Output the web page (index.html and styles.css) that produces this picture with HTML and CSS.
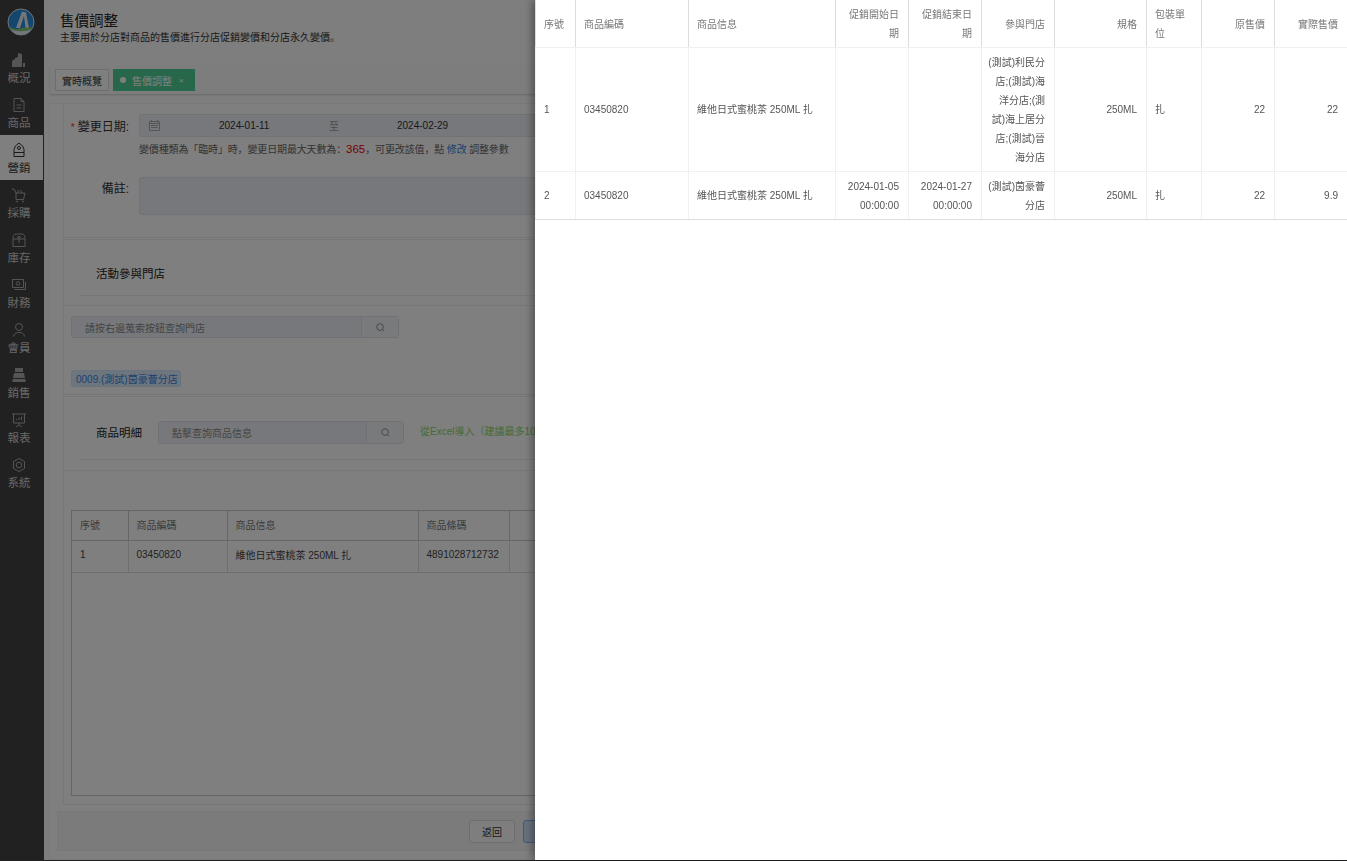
FILE: index.html
```html
<!DOCTYPE html>
<html lang="zh">
<head>
<meta charset="utf-8">
<title>售價調整</title>
<link rel="stylesheet" href="styles.css">
</head>
<body>
<div class="app">
  <nav class="side">
    <div class="logo">
      <svg viewBox="0 0 28 28" width="28" height="28">
        <circle cx="14" cy="14" r="13" fill="#2a8cdc" stroke="#dfe8ee" stroke-width="1"/>
        <path d="M15 3.500 L19 4.500 L22 20 L9 20 Z" fill="#e8eef2"/>
        <path d="M13 20 L17 8 L18.500 20 Z" fill="#2a8cdc"/>
        <path d="M2.500 19 Q9 22 13 20.500 T25.500 19.500 L24.500 21.500 Q14 25 4 21.500 Z" fill="#86c96a"/>
        <path d="M4 21.500 Q14 25 24.500 21.500 Q20 27 14 27 Q8 27 4 21.500 Z" fill="#e8eef2"/>
      </svg>
    </div>
    <a class="item">
      <svg class="ico" viewBox="0 0 16 16"><path class="fill" d="M1 15V9l3-2v-1l3-1V1l4 1v13h-1V15zM12 11h2v4h-2z"/></svg>
      <span>概況</span>
    </a>
    <a class="item">
      <svg class="ico" viewBox="0 0 16 16"><path d="M3 1.500h7l3 3v10H3zM10 1.500v3h3M5.500 8h5M5.500 11h5"/></svg>
      <span>商品</span>
    </a>
    <a class="item active">
      <svg class="ico" viewBox="0 0 16 16"><path d="M3 7.500 Q3 4 8 1 Q13 4 13 7.500V14.500H3zM3 10.500h10"/><circle cx="8" cy="6" r="1.500"/></svg>
      <span>營銷</span>
    </a>
    <a class="item">
      <svg class="ico" viewBox="0 0 16 16"><path d="M1 2h2l2 4h9l-1.500 6.500H5L5 6M6 6l2-3M11 6L9.500 3"/><circle cx="6" cy="14.500" r=".6"/><circle cx="12" cy="14.500" r=".6"/></svg>
      <span>採購</span>
    </a>
    <a class="item">
      <svg class="ico" viewBox="0 0 16 16"><path d="M2 6.500 Q2 2 5 2h6q3 0 3 4.500v8H2zM2 7h12M8 11V4.500M6 6l2-2 2 2"/></svg>
      <span>庫存</span>
    </a>
    <a class="item">
      <svg class="ico" viewBox="0 0 16 16"><path d="M1.500 2.500h11v8h-11zM14.500 5v7.500h-11"/><circle cx="7" cy="6.500" r="1.800"/></svg>
      <span>財務</span>
    </a>
    <a class="item">
      <svg class="ico" viewBox="0 0 16 16"><circle cx="8" cy="5" r="3.500"/><path d="M2.500 14.500 Q3 10.500 8 10.500 T13.500 14.500"/></svg>
      <span>會員</span>
    </a>
    <a class="item">
      <svg class="ico" viewBox="0 0 16 16"><path class="fill" d="M4 1h8v4H4zM3 6h10l1 5H2zM1.500 12h13v3h-13z"/></svg>
      <span>銷售</span>
    </a>
    <a class="item">
      <svg class="ico" viewBox="0 0 16 16"><path d="M1 2h14M2.500 2v9h11V2M8 11v2M5 15l3-2 3 2M5.500 8V7M8 8V5.500M10.500 8V4.500"/></svg>
      <span>報表</span>
    </a>
    <a class="item">
      <svg class="ico" viewBox="0 0 16 16"><path d="M8 1.500l5.500 3v7L8 14.500l-5.500-3v-7z"/><circle cx="8" cy="8" r="2.800"/></svg>
      <span>系統</span>
    </a>
  </nav>

  <main class="main">
    <header class="head">
      <h1 class="title">售價調整</h1>
      <p class="desc">主要用於分店對商品的售價進行分店促銷變價和分店永久變價。</p>
    </header>

    <div class="tabs">
      <span class="tab">實時概覽</span>
      <span class="tab tab-on"><i class="dot"></i>售價調整<em class="close">×</em></span>
    </div>

    <div class="card">
      <section class="panel panel-form">
        <div class="row">
          <label class="lab"><b class="req">*</b>變更日期:</label>
          <div class="date">
            <svg class="cal" viewBox="0 0 11 11"><path d="M.5 1.500h10v9H.5zM.5 3.500h10M2.500 0v2M8.500 0v2M2 5.500h7M2 7.500h7"/></svg>
            <span class="d1">2024-01-11</span>
            <span class="to">至</span>
            <span class="d2">2024-02-29</span>
          </div>
        </div>
        <p class="hint">變價種類為「臨時」時&#xFF0C;變更日期最大天數為&#xFF1A;<span class="num">365</span>&#xFF0C;可更改該值&#xFF0C;點 <a class="link">修改</a> 調整參數</p>
        <div class="row row-note">
          <label class="lab">備註:</label>
          <div class="note"></div>
        </div>
      </section>

      <section class="panel panel-head">
        <h2 class="sub">活動參與門店</h2>
        <div class="rule"></div>
      </section>

      <section class="panel panel-store">
        <div class="search s-store">
          <span class="ph">請按右邊蒐索按鈕查詢門店</span>
          <span class="sbtn"><svg class="mag" viewBox="0 0 10 10"><circle cx="4.500" cy="4.500" r="3.700"/><path d="M7.200 7.200l1.800 1.800"/></svg></span>
        </div>
        <span class="tag">0009.(測試)茵豪薈分店</span>
      </section>

      <section class="panel panel-goods">
        <div class="ghead">
          <h2 class="sub">商品明細</h2>
          <div class="search s-goods">
            <span class="ph">點擊查詢商品信息</span>
            <span class="sbtn"><svg class="mag" viewBox="0 0 10 10"><circle cx="4.500" cy="4.500" r="3.700"/><path d="M7.200 7.200l1.800 1.800"/></svg></span>
          </div>
          <span class="excel">從Excel導入&#xFF08;建議最多1000條&#xFF09;</span>
        </div>
        <div class="rule rule-g"></div>
        <div class="gbody">
          <div class="gtable">
            <table class="t-under">
              <colgroup><col class="u1"><col class="u2"><col class="u3"><col class="u4"><col class="u5"></colgroup>
              <thead><tr><th>序號</th><th>商品編碼</th><th>商品信息</th><th>商品條碼</th><th></th></tr></thead>
              <tbody><tr><td>1</td><td>03450820</td><td>維他日式蜜桃茶 250ML 扎</td><td>4891028712732</td><td></td></tr></tbody>
            </table>
          </div>
        </div>
      </section>

      <footer class="foot">
        <button class="btn">返回</button>
        <button class="btn btn-p">保存</button>
      </footer>
    </div>
  </main>
</div>

<div class="mask"></div>

<aside class="drawer">
  <table class="t-draw">
    <colgroup>
      <col class="c1"><col class="c2"><col class="c3"><col class="c4"><col class="c5"><col class="c6"><col class="c7"><col class="c8"><col class="c9"><col class="c10">
    </colgroup>
    <thead>
      <tr>
        <th>序號</th><th>商品編碼</th><th>商品信息</th>
        <th class="r">促銷開始日期</th><th class="r">促銷結束日期</th><th class="r">參與門店</th>
        <th class="r">規格</th><th>包裝單位</th><th class="r">原售價</th><th class="r">實際售價</th>
      </tr>
    </thead>
    <tbody>
      <tr>
        <td>1</td><td>03450820</td><td>維他日式蜜桃茶 250ML 扎</td>
        <td class="r"></td><td class="r"></td>
        <td class="r stores">(測試)利民分店;(測試)海洋分店;(測試)海上居分店;(測試)晉海分店</td>
        <td class="r">250ML</td><td>扎</td><td class="r">22</td><td class="r">22</td>
      </tr>
      <tr>
        <td>2</td><td>03450820</td><td>維他日式蜜桃茶 250ML 扎</td>
        <td class="r">2024-01-05 00:00:00</td><td class="r">2024-01-27 00:00:00</td>
        <td class="r stores">(測試)茵豪薈分店</td>
        <td class="r">250ML</td><td>扎</td><td class="r">22</td><td class="r">9.9</td>
      </tr>
    </tbody>
  </table>
</aside>
</body>
</html>
```

FILE: styles.css
```css
* { box-sizing: border-box; }
html, body { margin: 0; height: 100%; overflow: hidden; }
body {
  background: #444;
  font-family: "Liberation Sans", "Noto Sans CJK SC", sans-serif;
  font-size: 10px;
  color: #333;
}
h1, h2, p { margin: 0; font-weight: 400; }

.app { display: flex; height: 860px; }

/* sidebar */
.side { width: 44px; flex: none; background: #434343; }
.logo { height: 45px; display: flex; align-items: center; justify-content: center; padding: 0 6px 1px 4px; }
.item {
  height: 45px;
  display: flex;
  flex-direction: column;
  align-items: center;
  padding-top: 7px;
  padding-right: 6px;
  font-size: 11.500px;
  line-height: 17px;
  color: #d0d0d0;
}
.item .ico { width: 16px; height: 16px; display: block; fill: none; stroke: #aaa; stroke-width: 1; margin-bottom: 2px; }
.item .fill { fill: #aaa; stroke: none; }
.item.active { background: #fff; color: #333; margin-right: 1px; padding-right: 5px; }
.item.active .ico { stroke: #333; }

/* main */
.main { flex: 1; min-width: 0; background: #fcfcfc; display: flex; flex-direction: column; }
.head { height: 66px; padding: 12px 16px 0; }
.title { font-size: 14.500px; line-height: 18px; color: #222; }
.desc { line-height: 14px; margin-top: 1px; color: #333; }

.tabs {
  height: 28px;
  margin-left: 6px;
  padding: 3px 5px;
  display: flex;
  gap: 4px;
  background: #fafafa;
  box-shadow: 0 1px 2px rgba(0,0,0,.18);
}
.tab {
  height: 22px;
  width: 54px;
  display: flex;
  align-items: center;
  justify-content: center;
  border: 1px solid #ddd;
  background: #fff;
  color: #333;
}
.tab-on {
  width: 82px;
  justify-content: flex-start;
  padding-left: 7px;
  background: #50d094;
  border: 0;
  color: #fff;
}
.dot { width: 6px; height: 6px; border-radius: 50%; background: #fff; margin-right: 6px; }
.close { font-style: normal; margin-left: 7px; font-size: 8px; }

.card {
  flex: 1;
  margin: 9px 0 0 5px;
  padding: 0 0 8px 13px;
  background: #fff;
  border: 1px solid #f2f2f2;
  position: relative;
  display: flex;
  flex-direction: column;
  min-width: 0;
}
.panel { border: 1px solid #eee; border-top: 0; background: #fff; flex: none; }
.panel-form { height: 134px; padding: 10px 0 0 5px; }
.row { display: flex; align-items: center; height: 23px; }
.lab { width: 70px; font-size: 12px; text-align: right; color: #333; flex: none; padding-right: 10px; white-space: nowrap; }
.req { color: #e33; font-weight: 400; margin-right: 3px; font-size: 10px; }
.date {
  width: 1100px;
  height: 23px;
  background: #edf1f6;
  border: 1px solid #e0e4ea;
  border-radius: 3px;
  display: flex;
  align-items: center;
  padding-left: 9px;
  flex: none;
  white-space: nowrap;
}
.cal { width: 11px; height: 11px; fill: none; stroke: #aaa; stroke-width: 1; flex: none; }
.d1 { margin-left: 59px; width: 50px; }
.to { margin-left: 60px; color: #999; }
.d2 { margin-left: 58px; }
.hint { margin: 4px 0 0 70px; line-height: 17px; color: #666; white-space: nowrap; letter-spacing: -.14px; }
.num { font-size: 11.500px; color: #e00; letter-spacing: 0; }
.link { color: #3a80d8; }
.row-note { align-items: flex-start; height: 38px; margin-top: 19px; }
.row-note .lab { padding-top: 2px; }
.note { width: 1100px; height: 38px; background: #edf1f6; border: 1px solid #e0e4ea; border-radius: 3px; flex: none; }

.panel-head { height: 67px; margin-top: 1px; padding: 0 0 0 32px; border-top: 1px solid #eee; display: flex; flex-direction: column; }
.sub { font-size: 11.500px; line-height: 16px; color: #222; flex: none; }
.panel-head .sub { margin-top: 26px; }
.panel-head .rule { margin: auto 0 9px -16px; }
.rule { height: 1px; background: #eee; }

.panel-store { height: 89px; padding: 10px 0 0 7px; }
.search {
  display: flex;
  height: 23px;
  background: #edf1f6;
  border: 1px solid #dfe3e8;
  border-radius: 3px;
  align-items: center;
  flex: none;
}
.s-store { width: 328px; height: 22px; }
.s-goods { width: 246px; margin-left: 16px; }
.ph { flex: 1; padding-left: 13px; color: #888; }
.sbtn { width: 37px; height: 100%; border-left: 1px solid #dfe3e8; display: flex; align-items: center; justify-content: center; background: #f2f4f8; }
.mag { width: 9px; height: 9px; fill: none; stroke: #888; stroke-width: 1; }
.tag {
  display: flex;
  width: 110px;
  white-space: nowrap;
  align-items: center;
  height: 17px;
  margin-top: 32px;
  padding: 0 4px;
  background: #dbeafc;
  border: 1px solid #d2e4fa;
  border-radius: 3px;
  color: #3a86e0;
}

.panel-goods { flex: 1; margin-top: 1px; border-top: 1px solid #eee; display: flex; flex-direction: column; min-height: 0; margin-bottom: 6px; }
.ghead { height: 62px; display: flex; align-items: flex-start; padding: 24px 0 0 32px; flex: none; }
.ghead .sub { line-height: 25px; }
.excel { margin-left: 16px; color: #86d66a; line-height: 21px; white-space: nowrap; }
.rule-g { margin-left: 15px; flex: none; }
.gbody { flex: 1; border-top: 1px solid #eee; margin-top: 10px; padding: 39px 0 8px 7px; display: flex; }
.gtable { width: 1200px; border: 1px solid #ccc; }

table { border-collapse: collapse; table-layout: fixed; }
.t-under th, .t-under td { text-align: left; padding: 0 8px; border: 1px solid #ddd; }
.t-under tr > *:first-child { border-left: 0; }
.t-under th { height: 29px; padding-bottom: 1px; border-color: #ccc; border-top: 0; font-weight: 400; color: #777; }
.t-under td { height: 32px; padding-bottom: 3px; color: #444; }
.u1 { width: 56px; } .u2 { width: 99px; } .u3 { width: 191px; } .u4 { width: 91px; } .u5 { width: 300px; }

.foot {
  height: 40px;
  margin-left: -6px;
  background: #f6f6f6;
  border: 1px solid #f3f3f3;
  display: flex;
  gap: 8px;
  align-items: center;
  padding: 0 0 0 411px;
  flex: none;
}
.btn { width: 46px; height: 23px; padding: 0; font: inherit; color: #333; background: #fcfcfc; border: 1px solid #ddd; border-radius: 3px; flex: none; }
.btn-p { background: #cfe2fa; border-color: #7db4f5; color: #fff; }

/* overlay */
.mask { position: fixed; inset: 0; background: rgba(0,0,0,.5); }

.drawer {
  position: fixed;
  top: 0;
  left: 535px;
  width: 812px;
  height: 860px;
  background: #fff;
  box-shadow: -3px 0 8px rgba(0,0,0,.35);
}
.t-draw { width: 812px; line-height: 19px; color: #555; }
.t-draw th, .t-draw td { padding: 4.500px 9px 4.500px 8px; text-align: left; word-break: break-all; font-weight: 400; }
.t-draw th { height: 47.500px; padding-top: 5px; padding-bottom: 4px; color: #777; border-right: 1px solid #ddd; border-left: 1px solid #ddd; border-bottom: 1px solid #f0f0f0; }
.t-draw td { border: 1px solid #f0f0f4; }
.t-draw tr:last-child td { border-bottom: 1px solid #ddd; }
.t-draw .r { text-align: right; }
.t-draw .stores { padding-left: 6px; }
.c1 { width: 40px; } .c2 { width: 113px; } .c3 { width: 147px; } .c4 { width: 73px; } .c5 { width: 73px; }
.c6 { width: 73px; } .c7 { width: 92px; } .c8 { width: 55px; } .c9 { width: 73px; } .c10 { width: 73px; }
```
